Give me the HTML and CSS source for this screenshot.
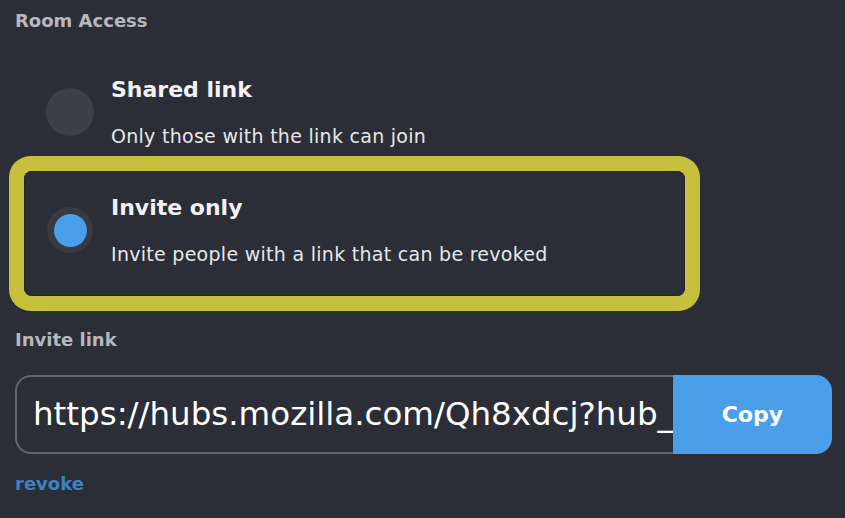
FILE: index.html
```html
<!DOCTYPE html>
<html>
<head>
<meta charset="utf-8">
<link rel="stylesheet" href="styles.css">
</head>
<body>
<div class="page">
  <div class="section-label">Room Access</div>
  <div class="options">
    <label class="option">
      <span class="radio"></span>
      <span class="option-text">
        <span class="option-title">Shared link</span>
        <span class="option-desc">Only those with the link can join</span>
      </span>
    </label>
    <label class="option option-selected">
      <span class="radio radio-checked"><span class="radio-dot"></span></span>
      <span class="option-text">
        <span class="option-title">Invite only</span>
        <span class="option-desc">Invite people with a link that can be revoked</span>
      </span>
    </label>
  </div>
  <div class="section-label link-label">Invite link</div>
  <div class="link-field">
    <div class="link-value">https://hubs.mozilla.com/Qh8xdcj?hub_</div>
    <button class="copy-btn">Copy</button>
  </div>
  <a class="revoke">revoke</a>
</div>
</body>
</html>
```
FILE: styles.css
```css
html, body {
  margin: 0;
  padding: 0;
  background: #2b2e36;
}
body {
  width: 845px;
  height: 518px;
  overflow: hidden;
  font-family: "DejaVu Sans", "Noto Sans", sans-serif;
}
.page {
  padding: 10px 13px 0 15px;
}
.section-label {
  font-size: 18px;
  line-height: 22px;
  font-weight: 700;
  color: #b6b8be;
}
.options {
  margin-top: 21px;
  display: flex;
  flex-direction: column;
}
.option {
  display: flex;
  align-items: center;
  height: 118px;
  margin-left: 9px;
  width: 661px;
  padding-left: 23px;
  box-sizing: border-box;
}
.option-selected {
  height: 125px;
  padding-bottom: 7px;
  border-radius: 8px;
  box-shadow: inset 0 0 0 1px #24262d, 0 0 0 15px #c6c03d;
}
.radio {
  flex: none;
  width: 48px;
  height: 48px;
  border-radius: 50%;
  background: #3c3f48;
  display: flex;
  align-items: center;
  justify-content: center;
  margin-left: -1px;
  margin-right: -1px;
}
.radio-checked {
  width: 46px;
  height: 46px;
  margin-left: 0;
  margin-right: 0;
  background: #373a42;
}
.radio-dot {
  width: 33px;
  height: 33px;
  border-radius: 50%;
  background: #4a9fe8;
}
.option-text {
  display: flex;
  flex-direction: column;
  margin-left: 18px;
}
.option-title {
  font-size: 22px;
  line-height: 28px;
  font-weight: 700;
  color: #f2f2f4;
}
.option-desc {
  margin-top: 20px;
  font-size: 19px;
  line-height: 24px;
  letter-spacing: 0.28px;
  color: #e6e7ea;
}
.link-label {
  margin-top: 33px;
}
.link-field {
  margin-top: 24px;
  display: flex;
  height: 79px;
}
.link-value {
  flex: 1;
  min-width: 0;
  padding-left: 16px;
  border: 2px solid #62656d;
  border-right: none;
  border-radius: 16px 0 0 16px;
  white-space: nowrap;
  overflow: hidden;
  font-size: 32.5px;
  line-height: 75px;
  color: #ffffff;
}
.copy-btn {
  flex: none;
  width: 159px;
  border: none;
  border-radius: 0 16px 16px 0;
  background: #4a9fe8;
  color: #ffffff;
  font-family: inherit;
  font-size: 22px;
  font-weight: 700;
  padding: 0;
}
.revoke {
  display: block;
  margin-top: 19px;
  font-size: 18px;
  line-height: 22px;
  font-weight: 700;
  color: #3b83c6;
}
```
